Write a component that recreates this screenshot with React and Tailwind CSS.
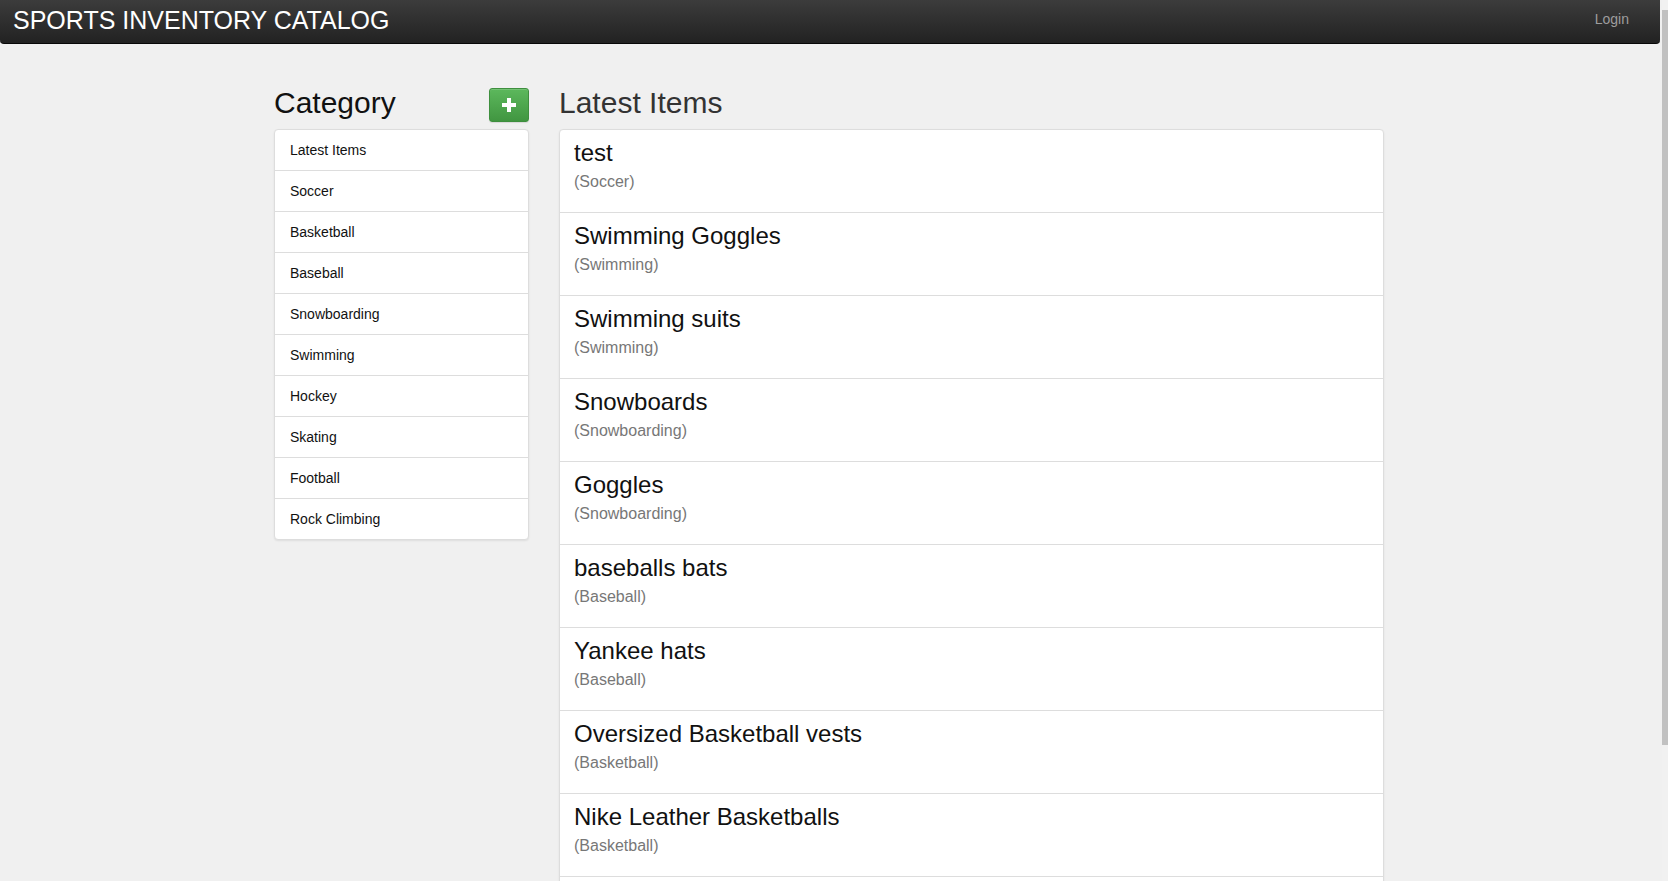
import React from 'react'

const categories = [
  'Latest Items', 'Soccer', 'Basketball', 'Baseball', 'Snowboarding',
  'Swimming', 'Hockey', 'Skating', 'Football', 'Rock Climbing',
]

const items = [
  { name: 'test', category: 'Soccer' },
  { name: 'Swimming Goggles', category: 'Swimming' },
  { name: 'Swimming suits', category: 'Swimming' },
  { name: 'Snowboards', category: 'Snowboarding' },
  { name: 'Goggles', category: 'Snowboarding' },
  { name: 'baseballs bats', category: 'Baseball' },
  { name: 'Yankee hats', category: 'Baseball' },
  { name: 'Oversized Basketball vests', category: 'Basketball' },
  { name: 'Nike Leather Basketballs', category: 'Basketball' },
]

function PlusIcon() {
  return (
    <svg width="14" height="14" viewBox="0 0 14 14">
      <rect x="5" y="0" width="4" height="14" fill="#fff" />
      <rect x="0" y="5" width="14" height="4" fill="#fff" />
    </svg>
  )
}

export default function App() {
  return (
    <div className="flex h-[881px] w-full overflow-hidden bg-[#f0f0f0]" style={{ fontFamily: '"Liberation Sans", Arial, sans-serif' }}>
      <div className="flex-1 flex flex-col min-w-0">
        {/* navbar */}
        <div className="w-[1660px] h-[44px] shrink-0 flex items-center justify-between rounded-b-[4px] border-b border-[#080808] bg-gradient-to-b from-[#3c3c3c] to-[#222222] pl-[13px] pr-[31px]">
          <span className="text-white text-[25px] leading-none -mt-[2px]">SPORTS INVENTORY CATALOG</span>
          <span className="text-[#9d9d9d] text-[14px] leading-none -mt-[6px]">Login</span>
        </div>

        <div className="flex items-start pl-[274px] pt-[42px] gap-[30px]">
          {/* sidebar */}
          <div className="w-[255px] shrink-0">
            <div className="flex items-start justify-between mb-[7px]">
              <h2 className="text-[30px] leading-[33px] text-[#111]">Category</h2>
              <button className="mt-[2px] w-[40px] h-[34px] flex items-center justify-center rounded-[3px] border border-[#3e8f3e] bg-gradient-to-b from-[#5cb85c] to-[#419641] shadow-[inset_0_1px_0_rgba(255,255,255,0.15),0_1px_1px_rgba(0,0,0,0.1)]">
                <PlusIcon />
              </button>
            </div>
            <div className="bg-white border border-[#ddd] rounded-[4px] shadow-[0_1px_2px_rgba(0,0,0,0.08)]">
              {categories.map((c, i) => (
                <div key={c} className={`px-[15px] py-[10px] text-[14px] leading-[20px] text-[#111] ${i < categories.length - 1 ? 'border-b border-[#ddd]' : ''}`}>
                  {c}
                </div>
              ))}
            </div>
          </div>

          {/* latest items */}
          <div className="w-[825px] shrink-0">
            <h2 className="text-[30px] leading-[33px] text-[#333] mb-[10px]">Latest Items</h2>
            <div className="bg-white border border-[#ddd] rounded-[4px] shadow-[0_1px_2px_rgba(0,0,0,0.08)]">
              {items.map((it, i) => (
                <div key={i} className="h-[83px] border-b border-[#ddd] px-[14px] pt-[10px]">
                  <div className="text-[24px] leading-[26px] text-[#111]">{it.name}</div>
                  <div className="mt-[5px] text-[16px] leading-[22px] text-[#777]">({it.category})</div>
                </div>
              ))}
              <div className="h-[83px]" />
            </div>
          </div>
        </div>
      </div>

      {/* scrollbar */}
      <div className="w-[6px] shrink-0 bg-[#f1f1f1] pt-[10px]">
        <div className="h-[735px] bg-[#c1c1c1]" />
      </div>
    </div>
  )
}
